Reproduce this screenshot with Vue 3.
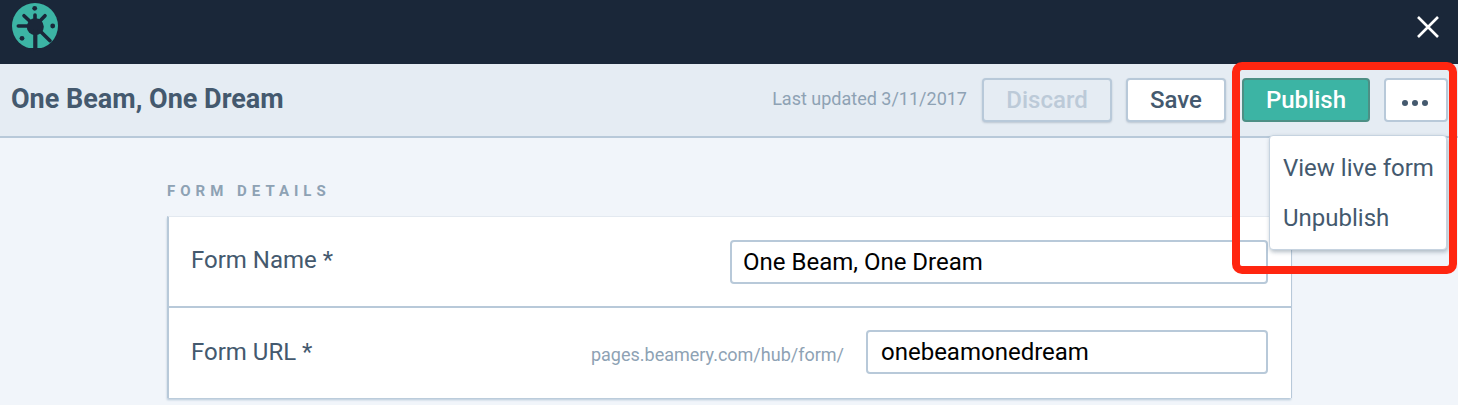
<template>
  <div class="page">
    <div class="topbar">
      <svg class="logo" width="48" height="48" viewBox="0 0 48 48">
        <circle cx="24" cy="23" r="23" fill="#3cb4a4" />
        <rect x="0" y="45" width="48" height="3" fill="#1a2739" />
        <g fill="none" stroke="#1a2739" stroke-width="3.6" stroke-linecap="round">
          <path d="M24 23 L24 12" />
          <path d="M24 23 L13 12.7" />
          <path d="M24 23 L34 12.7" />
          <path d="M24 23 L7.3 23" />
          <path d="M24 23 L39 37.7" />
        </g>
        <circle cx="24.3" cy="23.7" r="8.5" fill="#1a2739" />
        <rect x="22.2" y="26" width="4.2" height="22" fill="#1a2739" />
        <circle cx="23.7" cy="5.3" r="2.4" fill="#1a2739" />
        <circle cx="41.7" cy="23" r="2.4" fill="#1a2739" />
        <circle cx="11" cy="35.3" r="2.4" fill="#1a2739" />
      </svg>
      <svg class="close" width="22" height="22" viewBox="0 0 22 22">
        <path d="M1 1 L21 21 M21 1 L1 21" stroke="#fff" stroke-width="2.6" />
      </svg>
    </div>

    <div class="header">
      <h1 class="title">One Beam, One Dream</h1>
      <span class="updated">Last updated 3/11/2017</span>
      <button class="btn discard">Discard</button>
      <button class="btn save">Save</button>
      <button class="btn publish">Publish</button>
      <button class="btn more" aria-label="More">
        <span class="dot"></span><span class="dot"></span><span class="dot"></span>
      </button>
      <div class="menu">
        <div class="menu-item">View live form</div>
        <div class="menu-item">Unpublish</div>
      </div>
    </div>

    <div class="content">
      <div class="section-label">FORM DETAILS</div>
      <div class="card">
        <div class="row">
          <label class="row-label">Form Name *</label>
          <input class="field name-field" value="One Beam, One Dream" />
        </div>
        <div class="row">
          <label class="row-label">Form URL *</label>
          <span class="prefix">pages.beamery.com/hub/form/</span>
          <input class="field url-field" value="onebeamonedream" />
        </div>
      </div>
    </div>

    <!-- annotation drawn over the screenshot -->
    <div class="highlight"></div>
  </div>
</template>

<script setup>
</script>

<style>
html, body {
  margin: 0;
  overflow: hidden;
}
</style>

<style scoped>
.page {
  position: relative;
  height: 405px;
  overflow: hidden;
  background: #f1f5fa;
  font-family: Roboto, "Liberation Sans", sans-serif;
  color: #44596e;
}
.topbar {
  height: 64px;
  box-sizing: border-box;
  padding: 3px 19px 0 11px;
  display: flex;
  justify-content: space-between;
  align-items: flex-start;
  background: #1a2739;
}
.close {
  margin-top: 13px;
}
.header {
  position: relative;
  height: 74px;
  box-sizing: border-box;
  padding: 0 10px 0 11px;
  display: flex;
  align-items: center;
  background: #e5ecf3;
  border-bottom: 2px solid #b8c9d9;
}
.title {
  margin: 0 auto 2px 0;
  font-size: 27px;
  font-weight: 700;
  color: #44596e;
}
.updated {
  margin: 0 15px 4px 0;
  font-size: 18px;
  color: #8ea2b4;
}
.btn {
  height: 44px;
  box-sizing: border-box;
  border: 2px solid #b8c9d9;
  border-radius: 4px;
  background: #fff;
  font-family: inherit;
  font-size: 24px;
  font-weight: 500;
  color: #44596e;
  padding: 0 0 1px;
}
.discard {
  width: 130px;
  margin-right: 14px;
  background: #e5ecf3;
  color: #bccad8;
  box-shadow: 0 1px 2px rgba(68, 89, 110, 0.25);
}
.save {
  width: 100px;
  margin-right: 16px;
  box-shadow: 0 1px 2px rgba(68, 89, 110, 0.25);
}
.publish {
  width: 128px;
  margin-right: 14px;
  background: #3cb4a4;
  border-color: #4d8f85;
  color: #fff;
}
.more {
  width: 64px;
  display: flex;
  align-items: center;
  justify-content: center;
  gap: 4px;
  padding: 6px 2px 0 0;
}
.dot {
  width: 6px;
  height: 6px;
  border-radius: 50%;
  background: #44596e;
}
.menu {
  position: absolute;
  top: 71px;
  right: 11px;
  width: 178px;
  height: 115px;
  box-sizing: border-box;
  padding-top: 7px;
  background: #fff;
  border-radius: 4px;
  border: 1px solid #c6d3e0;
  box-shadow: 1px 2px 4px rgba(68, 89, 110, 0.4);
  z-index: 2;
}
.menu-item {
  height: 50px;
  padding-left: 13px;
  line-height: 50px;
  font-size: 24px;
  white-space: nowrap;
}
.content {
  padding: 45px 167px 0;
}
.section-label {
  font-size: 15px;
  font-weight: 700;
  letter-spacing: 5px;
  line-height: 16px;
  color: #8ea2b4;
}
.card {
  margin-top: 17px;
  background: #fff;
  border-left: 2px solid #b8c9d9;
  border-top: 1px solid #e3e9f0;
  box-shadow: 0 2px 2px #b8c9d9, 1px 0 0 #b8c9d9;
}
.row {
  height: 89px;
  box-sizing: border-box;
  padding: 0 23px 0 22px;
  display: flex;
  align-items: center;
}
.row + .row {
  height: 92px;
  padding-bottom: 3px;
  border-top: 2px solid #b8c9d9;
}
.row-label {
  margin-right: auto;
  padding-bottom: 3px;
  font-size: 24px;
}
.row + .row .row-label {
  padding: 1px 0 0;
}
.prefix {
  margin-right: 22px;
  padding-top: 6px;
  font-size: 18px;
  color: #8ea2b4;
}
.field {
  height: 44px;
  box-sizing: border-box;
  padding: 0 11px;
  border: 2px solid #b8c9d9;
  border-radius: 4px;
  background: #fff;
  font-family: inherit;
  font-size: 24px;
  color: #000;
  outline: none;
}
.name-field {
  width: 538px;
}
.url-field {
  width: 402px;
  padding: 0 13px;
}
.highlight {
  position: absolute;
  left: 1232px;
  top: 62px;
  width: 225px;
  height: 212px;
  box-sizing: border-box;
  border: 8px solid #ff2610;
  border-radius: 10px;
  z-index: 3;
  pointer-events: none;
}
</style>
